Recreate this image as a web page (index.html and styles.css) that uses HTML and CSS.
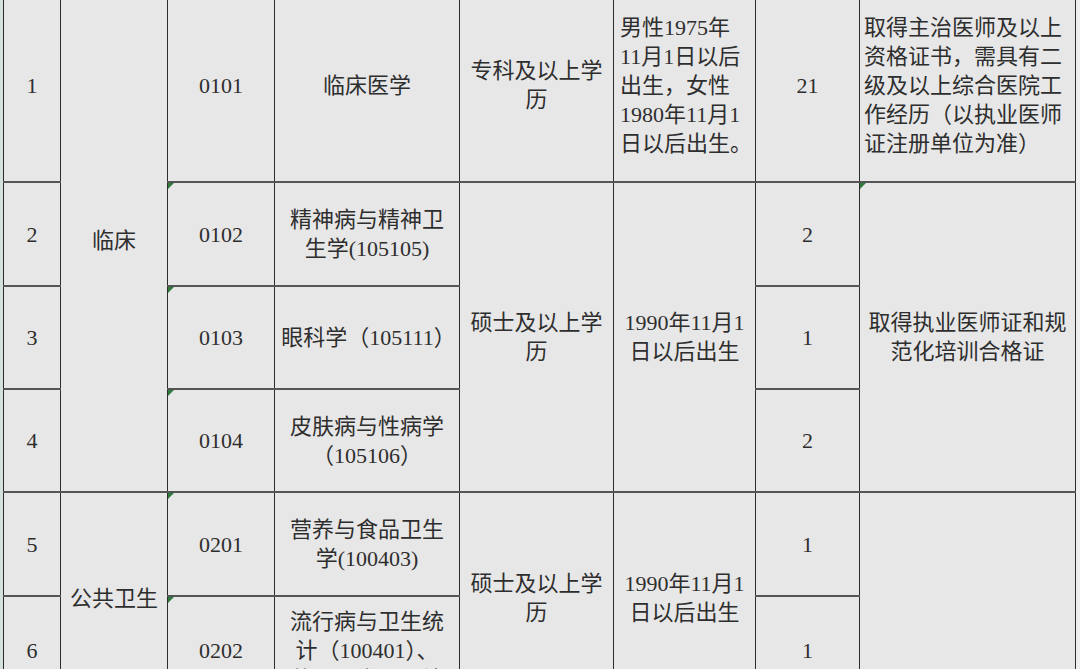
FILE: index.html
```html
<!DOCTYPE html>
<html lang="zh-CN">
<head>
<meta charset="utf-8">
<title>岗位表</title>
<link rel="stylesheet" href="styles.css">
</head>
<body>
<div class="sheet">
  <div class="gutter"></div>
  <table class="grid">
    <colgroup>
      <col class="c-no">
      <col class="c-type">
      <col class="c-code">
      <col class="c-major">
      <col class="c-edu">
      <col class="c-age">
      <col class="c-num">
      <col class="c-req">
    </colgroup>
    <tr class="r1">
      <td>1</td>
      <td rowspan="4">临床</td>
      <td>0101</td>
      <td>临床医学</td>
      <td>专科及以上学<br>历</td>
      <td class="left age">男性1975年<br>11月1日以后<br>出生，女性<br>1980年11月1<br>日以后出生。</td>
      <td>21</td>
      <td class="left req">取得主治医师及以上<br>资格证书，需具有二<br>级及以上综合医院工<br>作经历（以执业医师<br>证注册单位为准）</td>
    </tr>
    <tr class="r2">
      <td>2</td>
      <td class="flag">0102</td>
      <td>精神病与精神卫<br>生学(105105)</td>
      <td rowspan="3">硕士及以上学<br>历</td>
      <td rowspan="3">1990年11月1<br>日以后出生</td>
      <td>2</td>
      <td rowspan="3" class="flag">取得执业医师证和规<br>范化培训合格证</td>
    </tr>
    <tr class="r3">
      <td>3</td>
      <td class="flag">0103</td>
      <td class="major3">眼科学（105111）</td>
      <td>1</td>
    </tr>
    <tr class="r4">
      <td>4</td>
      <td class="flag">0104</td>
      <td>皮肤病与性病学<br>（105106）</td>
      <td>2</td>
    </tr>
    <tr class="r5">
      <td>5</td>
      <td rowspan="2">公共卫生</td>
      <td class="flag">0201</td>
      <td>营养与食品卫生<br>学(100403)</td>
      <td rowspan="2">硕士及以上学<br>历</td>
      <td rowspan="2">1990年11月1<br>日以后出生</td>
      <td>1</td>
      <td rowspan="2"></td>
    </tr>
    <tr class="r6">
      <td>6</td>
      <td class="flag">0202</td>
      <td>流行病与卫生统<br>计（100401）、<br>劳动卫生与环境</td>
      <td>1</td>
    </tr>
  </table>
</div>
</body>
</html>
```

FILE: styles.css
```css
html, body {
  margin: 0;
  padding: 0;
}

body {
  background: #efefef;
  width: 1080px;
  height: 669px;
  overflow: hidden;
  font-family: "Liberation Serif", "Noto Sans CJK SC", serif;
  color: #2e2e2e;
}

.sheet {
  display: flex;
  align-items: flex-start;
  height: 669px;
  overflow: hidden;
}

.gutter {
  flex: 0 0 3px;
  height: 669px;
  background: #d3e2da;
}

.grid {
  flex: 0 0 auto;
  width: 1072px;
  margin-top: -13px;
  table-layout: fixed;
  border-collapse: collapse;
  background: #e7e7e7;
  font-size: 22px;
  line-height: 29px;
}

.c-no { width: 57px; }
.c-type { width: 107px; }
.c-code { width: 107px; }
.c-major { width: 185px; }
.c-edu { width: 154px; }
.c-age { width: 142px; }
.c-num { width: 104px; }
.c-req { width: 216px; }

.grid td {
  padding: 0 3px;
  text-align: center;
  vertical-align: middle;
  white-space: nowrap;
  border-left: 1px solid #2c2c2c;
  border-right: 1px solid #2c2c2c;
  border-top: 2px solid #555555;
  border-bottom: 2px solid #555555;
}

.grid td.left {
  text-align: left;
}

.grid td.age {
  padding-left: 6px;
}

.grid td.req {
  padding-left: 4px;
}

.grid td.major3 {
  padding-left: 6px;
}

.r1 { height: 194px; }
.r2 { height: 104px; }
.r3 { height: 103px; }
.r4 { height: 103px; }
.r5 { height: 104px; }
.r6 { height: 108px; }

.grid td.flag {
  position: relative;
}

.grid td.flag::before {
  content: "";
  position: absolute;
  top: 0;
  left: 0;
  width: 0;
  height: 0;
  border-top: 6px solid #2f7a3e;
  border-right: 6px solid transparent;
}
```
